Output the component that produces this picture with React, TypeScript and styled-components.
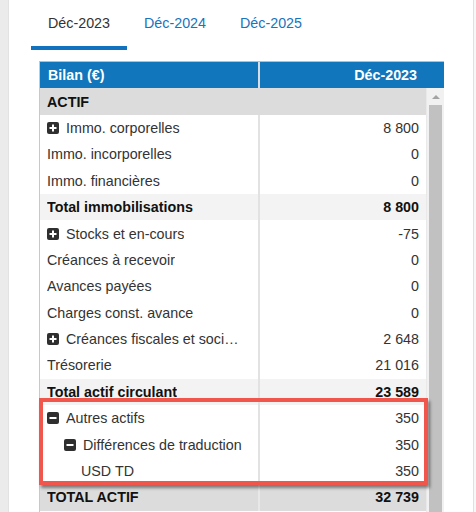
import React from 'react';
import styled, { createGlobalStyle } from 'styled-components';

const GlobalStyle = createGlobalStyle`
  html, body { margin: 0; padding: 0; }
  body {
    font-family: "Liberation Sans", Arial, sans-serif;
    background: #f7f7f7;
  }
`;

const Page = styled.div`
  display: flex;
  width: 476px;
  height: 512px;
  overflow: hidden;
`;

const SideStrip = styled.div`
  flex-shrink: 0;
  width: 8px;
  background: #ebebeb;
  border-right: 1px solid #e2e2e2;
`;

const Panel = styled.div`
  flex-shrink: 0;
  width: 464px;
  background: #fff;
  border-right: 1px solid #e0e0e0;
  display: flex;
  flex-direction: column;
`;

const Tabs = styled.div`
  display: flex;
  padding-left: 22px;
`;

const Tab = styled.div<{ $active?: boolean }>`
  box-sizing: border-box;
  height: 50px;
  padding: 15px 17px 0;
  font-size: 14.3px;
  color: ${p => (p.$active ? '#333' : '#1a73bd')};
  border-bottom: 4px solid ${p => (p.$active ? '#1272be' : 'transparent')};
  cursor: pointer;
`;

const TableWrap = styled.div`
  position: relative;
  box-sizing: border-box;
  width: 405px;
  margin: 11px 0 0 30px;
  flex: 1;
  border-left: 1px solid #c8c8c8;
  border-top: 1px solid #bdbdbd;
  display: flex;
  flex-direction: column;
`;

const HeaderRow = styled.div`
  display: grid;
  grid-template-columns: 218px 2px 1fr;
  height: 26.4px;
  background: #1176bc;
  color: #fff;
  font-weight: bold;
  font-size: 14.3px;
`;

const HeaderCell = styled.div<{ $right?: boolean }>`
  display: flex;
  align-items: center;
  justify-content: ${p => (p.$right ? 'flex-end' : 'flex-start')};
  padding: ${p => (p.$right ? '0 27px 0 0' : '0 0 0 8px')};
`;

const HeaderSep = styled.div`
  background: #d6dde4;
`;

const Body = styled.div`
  flex: 1;
  display: flex;
  overflow: hidden;
`;

const Rows = styled.div`
  flex: 1;
  display: flex;
  flex-direction: column;
`;

type Kind = 'row' | 'total' | 'grand' | 'section';

const bgFor = (k: Kind) =>
  k === 'section' || k === 'grand' ? '#dcdcdc' : k === 'total' ? '#f3f3f3' : '#fff';

const Row = styled.div<{ $kind: Kind }>`
  flex-shrink: 0;
  display: grid;
  grid-template-columns: ${p => (p.$kind === 'section' ? '1fr' : '218px 2px 1fr')};
  height: 26.4px;
  background: ${p => bgFor(p.$kind)};
  font-size: 14.3px;
  font-weight: ${p => (p.$kind === 'row' ? 'normal' : 'bold')};
  color: ${p => (p.$kind === 'row' ? '#333' : '#111')};
`;

const LabelCell = styled.div<{ $level: number }>`
  display: flex;
  align-items: center;
  gap: 7px;
  min-width: 0;
  padding: 0 15px 0 ${p => 7 + p.$level * 17}px;
`;

const LabelText = styled.span`
  white-space: nowrap;
  overflow: hidden;
  text-overflow: ellipsis;
`;

const ColSep = styled.div<{ $kind: Kind }>`
  background: ${p => (p.$kind === 'grand' ? '#e8e8e8' : '#e2e2e2')};
`;

const ValueCell = styled.div`
  display: flex;
  align-items: center;
  justify-content: flex-end;
  padding-right: 7px;
  white-space: nowrap;
`;

const ScrollTrack = styled.div`
  flex-shrink: 0;
  box-sizing: border-box;
  width: 18px;
  background: #f1f1f1;
  border-left: 1px solid #e9e9e9;
  display: flex;
  flex-direction: column;
`;

const ScrollArrow = styled.div`
  height: 17px;
  display: flex;
  align-items: center;
  justify-content: center;
  &::before {
    content: '';
    border-left: 4px solid transparent;
    border-right: 4px solid transparent;
    border-bottom: 4px solid #a3a3a3;
  }
`;

const ScrollThumb = styled.div`
  flex: 1;
  margin: 0 2px 0 2px;
  background: #c1c1c1;
`;

const Highlight = styled.div`
  position: absolute;
  left: -1px;
  top: 336px;
  box-sizing: border-box;
  width: 389px;
  height: 87px;
  border: 4px solid #f0564b;
  box-shadow: 2px 3px 3px rgba(0, 0, 0, 0.45);
  pointer-events: none;
`;

const ToggleIcon = ({ open }: { open?: boolean }) => (
  <svg width="12" height="12" viewBox="0 0 12 12" style={{ flexShrink: 0 }}>
    <rect x="0" y="0" width="12" height="12" rx="2" fill="#2f2f2f" />
    <rect x="2.5" y="5" width="7" height="2" fill="#fff" />
    {!open && <rect x="5" y="2.5" width="2" height="7" fill="#fff" />}
  </svg>
);

type Item = {
  label: string;
  value?: string;
  kind?: Kind;
  icon?: 'plus' | 'minus';
  level?: number;
};

const nb = (s: string) => s.replace(' ', '\u00a0');

const items: Item[] = [
  { label: 'ACTIF', kind: 'section' },
  { label: 'Immo. corporelles', value: '8 800', icon: 'plus' },
  { label: 'Immo. incorporelles', value: '0' },
  { label: 'Immo. financières', value: '0' },
  { label: 'Total immobilisations', value: '8 800', kind: 'total' },
  { label: 'Stocks et en-cours', value: '-75', icon: 'plus' },
  { label: 'Créances à recevoir', value: '0' },
  { label: 'Avances payées', value: '0' },
  { label: 'Charges const. avance', value: '0' },
  { label: 'Créances fiscales et sociales', value: '2 648', icon: 'plus' },
  { label: 'Trésorerie', value: '21 016' },
  { label: 'Total actif circulant', value: '23 589', kind: 'total' },
  { label: 'Autres actifs', value: '350', icon: 'minus' },
  { label: 'Différences de traduction', value: '350', icon: 'minus', level: 1 },
  { label: 'USD TD', value: '350', level: 2 },
  { label: 'TOTAL ACTIF', value: '32 739', kind: 'grand' },
];

export default function App() {
  return (
    <>
      <GlobalStyle />
      <Page>
        <SideStrip />
        <Panel>
          <Tabs>
            <Tab $active>Déc-2023</Tab>
            <Tab>Déc-2024</Tab>
            <Tab>Déc-2025</Tab>
          </Tabs>
          <TableWrap>
            <HeaderRow>
              <HeaderCell>Bilan (€)</HeaderCell>
              <HeaderSep />
              <HeaderCell $right>Déc-2023</HeaderCell>
            </HeaderRow>
            <Body>
              <Rows>
                {items.map((it, i) => {
                  const kind = it.kind ?? 'row';
                  return (
                    <Row key={i} $kind={kind}>
                      <LabelCell $level={it.level ?? 0}>
                        {it.icon && <ToggleIcon open={it.icon === 'minus'} />}
                        <LabelText>{it.label}</LabelText>
                      </LabelCell>
                      {kind !== 'section' && (
                        <>
                          <ColSep $kind={kind} />
                          <ValueCell>{nb(it.value ?? '')}</ValueCell>
                        </>
                      )}
                    </Row>
                  );
                })}
              </Rows>
              <ScrollTrack>
                <ScrollArrow />
                <ScrollThumb />
              </ScrollTrack>
            </Body>
            <Highlight />
          </TableWrap>
        </Panel>
      </Page>
    </>
  );
}
